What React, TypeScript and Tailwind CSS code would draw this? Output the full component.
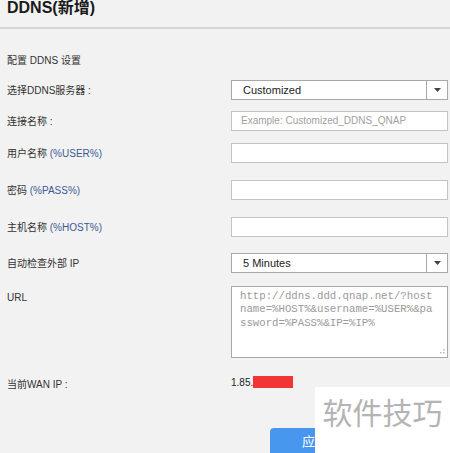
import {ReactNode} from 'react'

const font = {fontFamily: '"Liberation Sans", "Noto Sans CJK SC", sans-serif'}

function Row({label, children, className = ''}: {label: ReactNode, children: ReactNode, className?: string}) {
  return <div className={`flex items-center ${className}`}>
    <div className="w-[224px] shrink-0 text-[10px] text-[#333]">{label}</div>
    {children}
  </div>
}

function Select({value}: {value: string}) {
  return <div className="flex h-[20px] w-[217px] border border-[#a8a8a8] bg-white">
    <div className="flex-1 pl-[11px] text-[11px] leading-[18px] text-[#222]">{value}</div>
    <div className="flex w-[21px] items-center justify-center border-l border-[#a8a8a8]">
      <svg width="7" height="4" viewBox="0 0 7 4"><path d="M0 0h7L3.5 4z" fill="#444" /></svg>
    </div>
  </div>
}

function Input({placeholder}: {placeholder?: string}) {
  return <div className="h-[20px] w-[217px] border border-[#c4c4c4] bg-white pl-[9px] text-[10px] leading-[18px] text-[#a0a0a0]">
    {placeholder}
  </div>
}

const Tag = ({children}: {children: ReactNode}) => <span className="text-[#3b5a94]">{children}</span>

function App() {
  return <div className="relative h-[453px] w-[450px] overflow-hidden bg-[#f2f2f2]" style={font}>
    <div className="h-[29px] border-b-2 border-[#d6d6d6] pl-[7px]">
      <h1 className="text-[16px] font-bold leading-[15px] text-[#1a1a1a]">DDNS(新增)</h1>
    </div>

    <div className="pl-[7px]">
      <div className="mt-[25px] text-[10px] leading-[14px] text-[#333]">配置 DDNS 设置</div>

      <Row label="选择DDNS服务器 :" className="mt-[12px]"><Select value="Customized" /></Row>
      <Row label="连接名称 :" className="mt-[11px]"><Input placeholder="Example: Customized_DDNS_QNAP" /></Row>
      <Row label={<>用户名称 <Tag>(%USER%)</Tag></>} className="mt-[12px]"><Input /></Row>
      <Row label={<>密码 <Tag>(%PASS%)</Tag></>} className="mt-[17px]"><Input /></Row>
      <Row label={<>主机名称 <Tag>(%HOST%)</Tag></>} className="mt-[17px]"><Input /></Row>
      <Row label="自动检查外部 IP" className="mt-[16px]"><Select value="5 Minutes" /></Row>

      <div className="mt-[13px] flex">
        <div className="w-[224px] shrink-0 pt-[4px] text-[10px] text-[#333]">URL</div>
        <div className="relative h-[72px] w-[217px] border border-[#a8a8a8] bg-white pl-[8px] pr-[12px] pt-[3px] text-[10.7px] leading-[13.3px] text-[#9a9a9a] break-all"
          style={{fontFamily: '"Liberation Mono", monospace'}}>
          http://ddns.ddd.qnap.net/?hostname=%HOST%&amp;username=%USER%&amp;password=%PASS%&amp;IP=%IP%
          <svg className="absolute bottom-[2px] right-[2px]" width="7" height="7" viewBox="0 0 7 7">
            <rect x="5" y="1" width="1.5" height="1.5" fill="#bbb" />
            <rect x="5" y="4" width="1.5" height="1.5" fill="#bbb" />
            <rect x="2" y="4" width="1.5" height="1.5" fill="#bbb" />
          </svg>
        </div>
      </div>

      <div className="mt-[14px] flex">
        <div className="w-[224px] shrink-0 pt-[5px] text-[10px] text-[#333]">当前WAN IP :</div>
        <div className="flex items-center text-[10px] text-[#222]">
          1.85.<span className="inline-block h-[12px] w-[40px] bg-[#f23434]" />
        </div>
      </div>

      <div className="mt-[36px] pl-[263px]">
        <button className="h-[28px] w-[90px] rounded-[4px] bg-[#4797ef] text-[13px] text-white">应用</button>
      </div>
    </div>

    <div className="absolute bottom-0 right-0 flex h-[66px] w-[135px] items-start justify-center bg-white pt-[6px] text-[30px] leading-[36px] text-[#b4b4b4]"
      style={{fontFamily: '"Noto Sans CJK SC", sans-serif'}}>
      软件技巧
    </div>
  </div>
}

export default App
